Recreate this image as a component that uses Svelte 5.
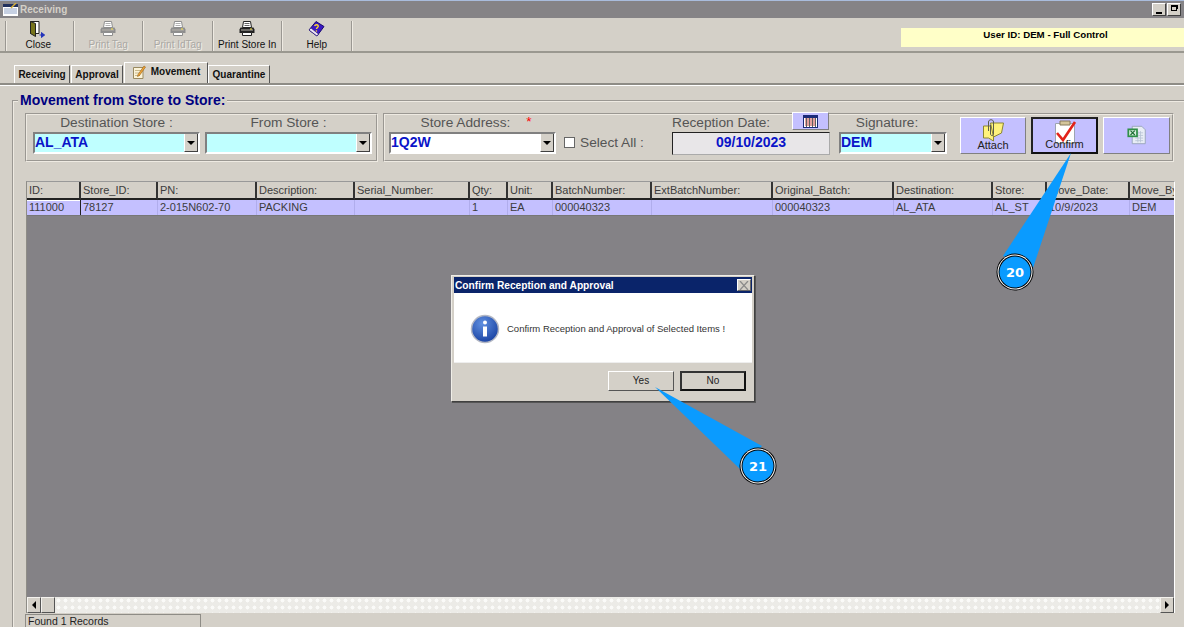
<script>
  const tools = [
    { label: 'Close', icon: 'door' },
    { label: 'Print Tag', icon: 'printer', off: true },
    { label: 'Print IdTag', icon: 'printer', off: true },
    { label: 'Print Store In', icon: 'printer' },
    { label: 'Help', icon: 'book' }
  ];
  const cols = [
    { h: 'ID:', w: 54, v: '111000' },
    { h: 'Store_ID:', w: 77, v: '78127' },
    { h: 'PN:', w: 99, v: '2-015N602-70' },
    { h: 'Description:', w: 98, v: 'PACKING' },
    { h: 'Serial_Number:', w: 115, v: '' },
    { h: 'Qty:', w: 38, v: '1' },
    { h: 'Unit:', w: 45, v: 'EA' },
    { h: 'BatchNumber:', w: 99, v: '000040323' },
    { h: 'ExtBatchNumber:', w: 121, v: '' },
    { h: 'Original_Batch:', w: 121, v: '000040323' },
    { h: 'Destination:', w: 99, v: 'AL_ATA' },
    { h: 'Store:', w: 54, v: 'AL_ST' },
    { h: 'Move_Date:', w: 83, v: '10/9/2023' },
    { h: 'Move_By:', w: 46, v: 'DEM' }
  ];
  const template = cols.map((c) => c.w + 'px').join(' ');
</script>

{#snippet combo(value, width, tone)}
  <div class="combo {tone}" style="width:{width}px">
    <span class="combo-value">{value}</span>
    <span class="combo-arrow"><i></i></span>
  </div>
{/snippet}

{#snippet printer()}
  <svg width="16" height="15" viewBox="0 0 16 15">
    <path d="M4.500 .5h7l1 6h-9z" fill="#fff" stroke="currentColor" />
    <path d="M5.500 2.500h5M5.500 4.500h5" stroke="currentColor" stroke-width=".7" />
    <path d="M1.500 6.500h13l1 2v3.500h-15v-3.500z" fill="currentColor" />
    <path d="M2 9h12" stroke="#b8b4ac" />
    <path d="M11 7.500h2v1h-2z" fill="#ffe94a" />
    <path d="M3.500 11.500h9v3h-9z" fill="#fff" stroke="currentColor" />
  </svg>
{/snippet}

{#snippet door()}
  <svg width="18" height="17" viewBox="0 0 18 17">
    <path d="M1.500 .5h8.500v12h-8.500z" fill="#fff" stroke="#222" />
    <path d="M1.500 .5l5 2v13l-5-3z" fill="#77741c" stroke="#222" />
    <path d="M10.500 14h5M15.500 14l-3-2.500v5z" fill="#2233bb" stroke="#2233bb" />
  </svg>
{/snippet}

{#snippet book()}
  <svg width="17" height="16" viewBox="0 0 17 16">
    <path d="M8 0.500l8 5-7 9.500-8-6z" fill="#3a19c4" stroke="#1a0a70" />
    <path d="M1 9l8 6 1.500-2-7.500-6z" fill="#ece4f4" stroke="#1a0a70" stroke-width=".6" />
    <path d="M6.500 5c1-2 4-1.500 3.700.4-.2 1-1.700 1.300-1.700 2.600" fill="none" stroke="#ffd92e" stroke-width="1.400" />
    <path d="M7.800 9.300h1.300v1.300h-1.300z" fill="#ffd92e" />
  </svg>
{/snippet}

<div class="screen">
  <div class="titlebar">
    <svg class="title-icon" width="15" height="13" viewBox="0 0 15 13">
      <path d="M0 1h15v12h-15z" fill="#fff" />
      <path d="M0 1h15v3h-15z" fill="#20305e" />
      <path d="M1 6h13M1 8h13M1 10h13" stroke="#8ea2c6" />
      <path d="M8 5l5-5" stroke="#d9b13a" stroke-width="1.500" />
    </svg>
    <span class="title-text">Receiving</span>
    <div class="win-buttons">
      <span class="win-btn"><i class="win-min"></i></span>
      <span class="win-btn"><i class="win-restore"></i></span>
    </div>
  </div>

  <div class="toolbar">
    {#each tools as t}
      <div class="tool" class:off={t.off}>
        <span class="tool-icon">
          {#if t.icon === 'door'}{@render door()}{:else if t.icon === 'book'}{@render book()}{:else}{@render printer()}{/if}
        </span>
        <span>{t.label}</span>
      </div>
    {/each}
    <div class="user-box">User ID: DEM - Full Control</div>
  </div>

  <div class="tabs">
    <div class="tab tab-receiving">Receiving</div>
    <div class="tab tab-approval">Approval</div>
    <div class="tab active">
      <svg width="14" height="14" viewBox="0 0 14 14">
        <path d="M1.500 2.500h9.500v11h-9.500z" fill="#fbf3d8" stroke="#9a8a60" />
        <path d="M3 5.500h6M3 8h6M3 10.500h5" stroke="#c9b98c" />
        <path d="M6 9.500l6-8.500 1.500 1-6 8.500-2 1z" fill="#f2a636" stroke="#93601a" stroke-width=".6" />
      </svg>
      Movement
    </div>
    <div class="tab tab-quarantine">Quarantine</div>
  </div>
  <div class="tabs-rule"></div>

  <fieldset class="movement">
    <legend>Movement from Store to Store:</legend>

    <div class="filters">
      <div class="group group-stores">
        <div class="field">
          <span class="label">Destination Store :</span>
          {@render combo('AL_ATA', 167, 'cyan')}
        </div>
        <div class="field">
          <span class="label">From Store :</span>
          {@render combo('', 167, 'cyan')}
        </div>
      </div>

      <div class="group group-main">
        <div class="field">
          <span class="label label-address">Store Address: <b class="req">*</b></span>
          {@render combo('1Q2W', 167, 'white')}
        </div>
        <div class="select-all"><span class="check"></span>Select All :</div>
        <div class="field field-date">
          <div class="date-head">
            <span class="label date-label">Reception Date:</span>
            <span class="cal-btn">
              <svg width="15" height="13" viewBox="0 0 15 13">
                <path d="M0 0h15v13h-15z" fill="#1b2a78" />
                <path d="M1 3h13v9h-13z" fill="#fff" />
                <path d="M2 4h11M2 6h11M2 8h11M2 10h11" stroke="#c8413c" />
                <path d="M3.500 3v9M6.500 3v9M9.500 3v9M12.500 3v9" stroke="#5f5f5f" />
              </svg>
            </span>
          </div>
          <div class="date-box">09/10/2023</div>
        </div>
        <div class="field">
          <span class="label label-sign">Signature:</span>
          {@render combo('DEM', 108, 'cyan')}
        </div>
        <div class="action attach">
          <svg width="23" height="23" viewBox="0 0 23 23">
            <path d="M2 7h10v15l-5-3h-5z" fill="#fff27c" stroke="#8b8530" />
            <path d="M9 4h13l-2 10-8 4z" fill="#fff27c" stroke="#8b8530" />
            <path d="M7 12v-9c0-3 5-3 5 0v12c0 2-3 2-3 0v-9" fill="none" stroke="#5d5d4c" />
          </svg>
          <span>Attach</span>
        </div>
        <div class="action confirm">
          <svg width="24" height="24" viewBox="0 0 24 24">
            <path d="M2.500 3.500h19v20h-19z" fill="#fff" stroke="#9da4b2" />
            <path d="M7 1h10v4h-10z" fill="#d4c59a" stroke="#867a5a" />
            <path d="M4 13l6 7 12-18" fill="none" stroke="#e2231a" stroke-width="2.600" />
          </svg>
          <span>Confirm</span>
        </div>
        <div class="action excel">
          <svg width="22" height="20" viewBox="0 0 22 23">
            <path d="M5.500 1.500h11l4 4v16h-15z" fill="#e8edf5" stroke="#93a0b5" />
            <path d="M9 9h9M9 12h9M9 15h9M9 18h9M12 7v13M15 7v13" stroke="#b9c4d6" />
            <path d="M0 4h12v10h-12z" fill="#2f8f48" />
            <path d="M2 6h8v6h-8z" fill="#d7efdc" />
            <path d="M3.500 6.500l5 5M8.500 6.500l-5 5" stroke="#1c6b33" stroke-width="1.300" />
          </svg>
        </div>
      </div>
    </div>

    <div class="grid">
      <div class="grid-row header" style="grid-template-columns:{template}">
        {#each cols as c}<div class="cell">{c.h}</div>{/each}
      </div>
      <div class="grid-row record" style="grid-template-columns:{template}">
        {#each cols as c}<div class="cell">{c.v}</div>{/each}
      </div>
      <div class="grid-empty"></div>
      <div class="scrollbar">
        <span class="sb-btn"><i class="arrow-left"></i></span>
        <span class="sb-btn"></span>
        <span class="sb-track"></span>
        <span class="sb-btn"><i class="arrow-right"></i></span>
      </div>
    </div>

    <div class="status">Found 1 Records</div>
  </fieldset>

  <div class="dialog">
    <div class="dlg-title">
      <span>Confirm Reception and Approval</span>
      <span class="dlg-close">
        <svg width="10" height="9" viewBox="0 0 10 9"><path d="M1 0l8 9M9 0l-8 9" stroke="#8c8c8c" stroke-width="1.300" /></svg>
      </span>
    </div>
    <div class="dlg-body">
      <svg width="30" height="30" viewBox="0 0 30 30">
        <defs>
          <radialGradient id="info" cx=".4" cy=".3" r=".8">
            <stop offset="0" stop-color="#5f8fe0" />
            <stop offset="1" stop-color="#123a9c" />
          </radialGradient>
        </defs>
        <circle cx="15" cy="15" r="13.500" fill="url(#info)" stroke="#b4b8c4" stroke-width="1.500" />
        <circle cx="15" cy="8.500" r="2" fill="#fff" />
        <path d="M13 12.500h4v10h-4z" fill="#fff" />
      </svg>
      <span class="dlg-msg">Confirm Reception and Approval of Selected Items !</span>
    </div>
    <div class="dlg-foot">
      <div class="dlg-btn">Yes</div>
      <div class="dlg-btn default">No</div>
    </div>
  </div>

  <svg class="callouts" width="1184" height="627" viewBox="0 0 1184 627">
    <path d="M1071 153L1003 256L1033 268z" fill="#0a9bff" />
    <path d="M655 387L762 446L741 470z" fill="#0a9bff" />
    <g>
      <circle cx="1015" cy="272" r="18.500" fill="#000" />
      <circle cx="1015" cy="272" r="17.500" fill="#fff" />
      <circle cx="1015" cy="272" r="16.500" fill="#000" />
      <circle cx="1015" cy="272" r="15.500" fill="#0a9bff" />
      <text x="1015" y="277">20</text>
    </g>
    <g>
      <circle cx="758" cy="466" r="18.500" fill="#000" />
      <circle cx="758" cy="466" r="17.500" fill="#fff" />
      <circle cx="758" cy="466" r="16.500" fill="#000" />
      <circle cx="758" cy="466" r="15.500" fill="#0a9bff" />
      <text x="758" y="471">21</text>
    </g>
  </svg>
</div>

<style>
  :global(body) {
    margin: 0;
    background: #d4d0c8;
  }
  .screen {
    position: relative;
    width: 1184px;
    height: 627px;
    overflow: hidden;
    background: #d4d0c8;
    border-top: 1px solid #a9bcdc;
    box-sizing: border-box;
    font-family: "Liberation Sans", Arial, sans-serif;
    color: #222;
  }
  .titlebar {
    display: flex;
    align-items: center;
    height: 17px;
    background: #858386;
    padding-left: 3px;
  }
  .title-icon {
    margin-right: 2px;
  }
  .title-text {
    color: #d4d0c8;
    font-size: 10px;
    font-weight: bold;
  }
  .win-buttons {
    display: flex;
    margin-left: auto;
    margin-right: 3px;
    gap: 1px;
  }
  .win-btn {
    position: relative;
    display: block;
    width: 14px;
    height: 13px;
    box-sizing: border-box;
    background: #d4d0c8;
    border: 1px solid;
    border-color: #fff #404040 #404040 #fff;
  }
  .win-min {
    position: absolute;
    left: 3px;
    bottom: 1px;
    width: 6px;
    height: 2px;
    background: #000;
  }
  .win-restore {
    position: absolute;
    left: 3px;
    top: 1px;
    width: 6px;
    height: 6px;
    border: 1px solid #000;
    border-top-width: 2px;
    box-sizing: border-box;
    box-shadow: 2px -1px 0 -1px #000;
  }
  .toolbar {
    position: relative;
    display: flex;
    height: 33px;
    padding-left: 5px;
    border-bottom: 2px solid #9a9890;
  }
  .tool {
    display: flex;
    flex-direction: column;
    align-items: center;
    width: 69.500px;
    height: 30px;
    margin-top: 3px;
    border-right: 2px groove #eeeae2;
    box-sizing: border-box;
    font-size: 10px;
    line-height: 12px;
    color: #111;
  }
  .tool:first-child {
    border-left: 2px groove #eeeae2;
    padding-right: 3px;
  }
  .tool-icon {
    display: block;
    height: 18px;
    color: #222;
  }
  .tool.off {
    color: #aaa8a4;
    text-shadow: 1px 1px 0 #f2efe9;
  }
  .tool.off .tool-icon {
    color: #8e8e8e;
  }
  .user-box {
    position: absolute;
    left: 901px;
    right: 0;
    top: 10px;
    height: 19px;
    padding-left: 6px;
    box-sizing: border-box;
    background: #ffffc8;
    color: #000;
    text-align: center;
    font-size: 9.700px;
    font-weight: bold;
    line-height: 13px;
  }
  .tabs {
    display: flex;
    align-items: flex-end;
    height: 21px;
    margin-top: 9px;
    padding-left: 14px;
    font-size: 10px;
    font-weight: bold;
    color: #111;
  }
  .tab {
    display: flex;
    align-items: center;
    justify-content: center;
    height: 18px;
    margin-right: 1px;
    box-sizing: border-box;
    border: 1px solid;
    border-color: #fff #555 transparent #fff;
    border-bottom: 0;
  }
  .tab-receiving { width: 56px; }
  .tab-approval { width: 52px; }
  .tab-quarantine { width: 62px; margin-left: -1px; }
  .tab.active {
    width: 84px;
    height: 21px;
    gap: 5px;
    padding-bottom: 3px;
    background: #d8d4cc;
  }
  .tabs-rule {
    height: 2px;
    background: #8e8c86;
    border-bottom: 1px solid #fff;
  }
  .movement {
    margin: 7px 0 0 12px;
    padding: 5px 0 0 11px;
    width: 1172px;
    height: 540px;
    box-sizing: border-box;
    border-style: groove;
    border-color: #eeeae2;
    border-width: 2px 0 0 2px;
    min-inline-size: 0;
  }
  legend {
    margin-left: -7px;
    padding: 0 2px;
    color: #000080;
    font-size: 14px;
    font-weight: bold;
    line-height: 15px;
  }
  .filters {
    display: flex;
    gap: 5px;
  }
  .group {
    display: flex;
    height: 49px;
    box-sizing: border-box;
    border: 2px groove #eeeae2;
    padding: 0 0 0 6px;
  }
  .group-stores {
    width: 353px;
    gap: 5px;
  }
  .group-main {
    width: 791px;
    padding-left: 4px;
  }
  .field {
    display: flex;
    flex-direction: column;
  }
  .label {
    display: block;
    height: 14px;
    margin-top: 1px;
    font-size: 13.700px;
    line-height: 14px;
    text-align: center;
    color: #555;
  }
  .label-address {
    padding-left: 7px;
  }
  .label-sign {
    padding-right: 12px;
  }
  .req {
    position: relative;
    top: -1px;
    margin-left: 12px;
    color: #f00;
    font-weight: normal;
  }
  .combo {
    display: flex;
    height: 22px;
    margin-top: 2px;
    box-sizing: border-box;
    border: 2px solid;
    border-color: #808080 #fff #fff #808080;
    font-size: 14px;
    font-weight: bold;
    color: #0a14c8;
  }
  .combo.cyan { background: #bfffff; }
  .combo.white { background: #fff; }
  .combo-value {
    flex: 1;
    line-height: 17px;
  }
  .combo-arrow {
    display: flex;
    align-items: center;
    justify-content: center;
    width: 14px;
    background: #d4d0c8;
    border-left: 1px solid #fff;
    border-right: 1px solid #404040;
    border-bottom: 1px solid #404040;
    box-sizing: border-box;
  }
  .combo-arrow i {
    border: 4px solid transparent;
    border-top-color: #000;
    border-bottom-width: 0;
  }
  .select-all {
    display: flex;
    align-items: center;
    height: 22px;
    margin: 16px 0 0 8px;
    width: 108px;
    font-size: 13.700px;
    color: #555;
  }
  .check {
    width: 11px;
    height: 11px;
    margin-right: 5px;
    background: #fff;
    border: 1px solid #666;
    box-sizing: border-box;
  }
  .field-date {
    width: 158px;
    margin-right: 9px;
    margin-top: -3px;
  }
  .date-head {
    display: flex;
    align-items: flex-start;
    height: 20px;
  }
  .date-label {
    width: 120px;
    margin-top: 4px;
    text-align: left;
  }
  .cal-btn {
    display: flex;
    align-items: center;
    justify-content: center;
    width: 37px;
    height: 18px;
    background: #c4c0ff;
    border: 1px solid;
    border-color: #fff #808080 #808080 #fff;
    box-sizing: border-box;
  }
  .date-box {
    height: 23px;
    box-sizing: border-box;
    border: 1px solid #222;
    border-right-color: #aaa;
    border-bottom-color: #aaa;
    background: #e8e6e8;
    color: #0a14c8;
    font-size: 14px;
    font-weight: bold;
    line-height: 18px;
    text-align: center;
  }
  .action {
    display: flex;
    flex-direction: column;
    align-items: center;
    justify-content: flex-end;
    position: relative;
    height: 37px;
    margin-top: 2px;
    padding-bottom: 1px;
    box-sizing: border-box;
    background: #c4c0ff;
    border: 1px solid;
    border-color: #fff #808080 #808080 #fff;
    font-size: 11px;
    line-height: 14px;
    color: #222;
  }
  .action svg {
    position: absolute;
    left: 50%;
    transform: translateX(-50%);
    top: 1px;
  }
  .action span {
    position: relative;
  }
  .attach {
    width: 66px;
    margin-left: 13px;
  }
  .confirm {
    width: 67px;
    margin-left: 5px;
    border: 2px solid;
    border-color: #222 #111 #111 #222;
  }
  .excel {
    width: 67px;
    margin-left: 5px;
  }
  .excel svg {
    top: 7px;
  }
  .grid {
    display: flex;
    flex-direction: column;
    width: 1149px;
    height: 432px;
    margin: 19px 0 0 1px;
    overflow: hidden;
    border-top: 1px solid #999;
    border-left: 1px solid #8e8c86;
    border-right: 1px solid #fff;
    box-sizing: border-box;
  }
  .grid-row {
    display: grid;
    flex: none;
    font-size: 11px;
    color: #3c3c3c;
  }
  .header {
    height: 18px;
    line-height: 17px;
  }
  .header .cell {
    border-right: 2px solid #333;
    border-bottom: 2px solid #222;
    background: #d4d0c8;
    padding-left: 2px;
  }
  .record {
    height: 16px;
    box-sizing: border-box;
    line-height: 15px;
    background: #c4c0ff;
    border-bottom: 1px solid #777;
  }
  .record .cell {
    border-right: 1px solid #b0adec;
    padding-left: 2px;
  }
  .record .cell:first-child {
    border-right: 1px solid #222;
    box-shadow: inset 0 1px 0 #fff;
  }
  .cell {
    min-width: 0;
    overflow: hidden;
    white-space: nowrap;
    box-sizing: border-box;
  }
  .grid-empty {
    flex: 1;
    background: #848286;
  }
  .scrollbar {
    display: flex;
    flex: none;
    height: 16px;
    background: #fff;
  }
  .sb-btn {
    display: flex;
    align-items: center;
    justify-content: center;
    flex: none;
    width: 14px;
    box-sizing: border-box;
    background: #d4d0c8;
    border: 1px solid;
    border-color: #f4f2ee #555 #555 #f4f2ee;
  }
  .sb-track {
    flex: 1;
    background-color: #ecebe7;
    background-image: radial-gradient(#fafaf8 35%, transparent 45%);
    background-size: 7px 7px;
  }
  .arrow-left, .arrow-right {
    border: 4px solid transparent;
  }
  .arrow-left {
    border-right-color: #000;
    border-left-width: 0;
  }
  .arrow-right {
    border-left-color: #000;
    border-right-width: 0;
  }
  .status {
    width: 176px;
    height: 14px;
    margin-top: 1px;
    box-sizing: border-box;
    border: 1px solid;
    border-color: #8e8c86 #8e8c86 transparent #8e8c86;
    padding-left: 2px;
    font-size: 10.500px;
    line-height: 13px;
    color: #222;
  }
  .dialog {
    position: absolute;
    left: 451px;
    top: 274px;
    width: 304px;
    height: 127px;
    display: flex;
    flex-direction: column;
    box-sizing: border-box;
    padding: 1px 2px 2px;
    background: #d4d0c8;
    border: 1px solid;
    border-color: #f0eee8 #404040 #404040 #f0eee8;
    box-shadow: 1px 1px 0 #555;
  }
  .dlg-title {
    display: flex;
    align-items: center;
    justify-content: space-between;
    height: 16px;
    padding: 0 1px 0 1px;
    background: #0a246a;
    color: #fff;
    font-size: 10.200px;
    font-weight: bold;
  }
  .dlg-close {
    display: flex;
    align-items: center;
    justify-content: center;
    width: 14px;
    height: 12px;
    background: #d4d0c8;
    border: 1px solid;
    border-color: #fff #666 #666 #fff;
    box-sizing: border-box;
  }
  .dlg-body {
    display: flex;
    align-items: center;
    gap: 7px;
    height: 69px;
    padding: 2px 0 0 16px;
    background: #fff;
    box-sizing: border-box;
  }
  .dlg-msg {
    font-size: 9.500px;
    color: #333;
  }
  .dlg-foot {
    display: flex;
    justify-content: flex-end;
    gap: 6px;
    padding: 8px 6px 0 0;
    border-top: 1px solid #eee;
  }
  .dlg-btn {
    width: 66px;
    height: 20px;
    box-sizing: border-box;
    border: 1px solid;
    border-color: #fff #555 #555 #fff;
    font-size: 10px;
    line-height: 18px;
    text-align: center;
    color: #222;
  }
  .dlg-btn.default {
    border: 2px solid;
    border-color: #333 #111 #111 #333;
    line-height: 16px;
  }
  .callouts {
    position: absolute;
    left: 0;
    top: -1px;
    pointer-events: none;
  }
  .callouts text {
    fill: #fff;
    font-family: "DejaVu Sans", sans-serif;
    font-size: 13px;
    font-weight: bold;
    text-anchor: middle;
  }
</style>
